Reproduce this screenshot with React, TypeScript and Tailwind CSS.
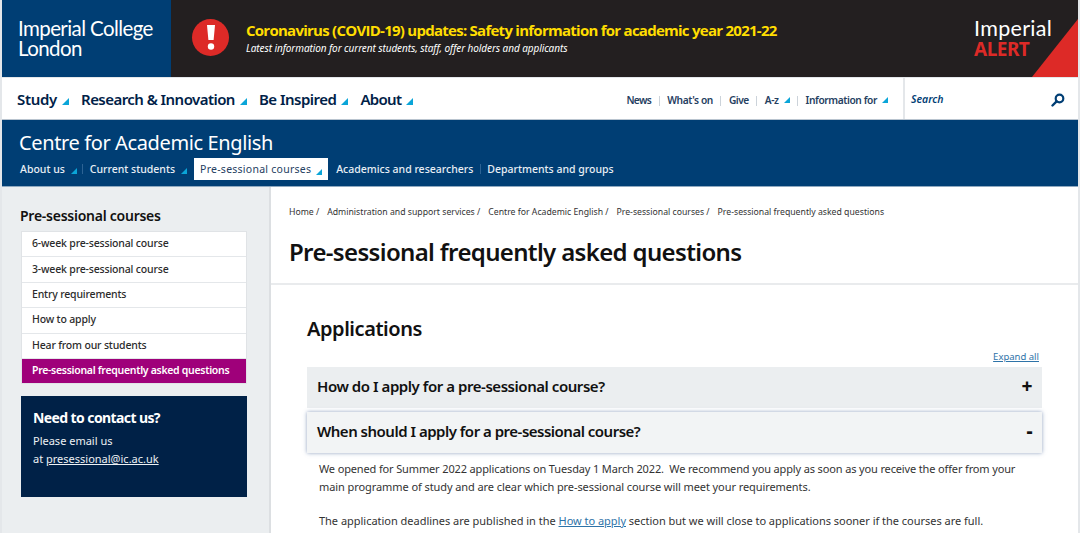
const mainNav = [
  { label: 'Study', cls: 'mr-[12px] tracking-[-0.3px]' },
  { label: 'Research & Innovation', cls: 'mr-[12px] tracking-[-0.55px]' },
  { label: 'Be Inspired', cls: 'mr-[12px] tracking-[-0.5px]' },
  { label: 'About', cls: 'mr-[12px] tracking-[-0.7px]' },
];
const sideLinks = [
  '6-week pre-sessional course',
  '3-week pre-sessional course',
  'Entry requirements',
  'How to apply',
  'Hear from our students',
];

function Marker({ size = 7, color = '#0aa5d8' }: { size?: number; color?: string }) {
  return (
    <svg width={size} height={size} viewBox="0 0 8 8" className="shrink-0">
      <polygon points="8,0 8,8 0,8" fill={color} />
    </svg>
  );
}

function Sep() {
  return <span className="w-px h-[10px] bg-[#ccd3da]" />;
}

export default function App() {
  return (
    <div className="w-[1080px] h-[533px] overflow-hidden bg-[#e4e7ea] pl-[2px] pr-[2px] font-['Noto_Sans',sans-serif]">
      {/* Alert banner */}
      <div className="flex h-[77px] bg-[#231f20]">
        <div className="w-[169px] bg-[#003e74] pl-[16px] pt-[18px] text-white text-[20.5px] leading-[20px] tracking-[-0.6px] font-['Lato',sans-serif]">
          Imperial College
          <br />
          London
        </div>
        <div className="ml-[21px] mt-[19px] w-[37px] h-[37px] rounded-full bg-[#dd2a27] flex items-center justify-center">
          <svg width="10" height="27" viewBox="0 0 10 27">
            <path d="M1 1h8l-1.4 15H2.400z" fill="#fff" />
            <circle cx="5" cy="22.500" r="3.200" fill="#fff" />
          </svg>
        </div>
        <div className="ml-[17px] pt-[20px]">
          <div className="text-[#ffdd00] text-[15px] leading-[20px] font-bold tracking-[-0.74px] font-['Open_Sans',sans-serif]">
            Coronavirus (COVID-19) updates: Safety information for academic year 2021-22
          </div>
          <div className="text-white text-[10px] leading-[16px] italic tracking-[-0.08px]">
            Latest information for current students, staff, offer holders and applicants
          </div>
        </div>
        <div className="ml-auto relative w-[104px] pt-[16px]">
          <div className="text-white text-[21.5px] leading-[24px] tracking-[0.3px] font-['Lato',sans-serif]">Imperial</div>
          <div className="text-[#dd2a27] text-[19px] leading-[19px] font-bold tracking-[-0.5px]">ALERT</div>
          <svg className="absolute right-0 bottom-0" width="46" height="58" viewBox="0 0 46 58">
            <polygon points="46,0 46,58 0,58" fill="#dd2a27" />
          </svg>
        </div>
      </div>

      {/* Main navigation */}
      <div className="flex h-[42px] mt-px bg-white border-b border-[#b9c4cf]">
        <div className="flex items-center pl-[15px] pt-[2px]">
          {mainNav.map((item) => (
            <div key={item.label} className={`flex items-center ${item.cls}`}>
              <span className="text-[#002147] text-[15px] font-semibold">{item.label}</span>
              <span className="ml-[5px] mt-[3px]">
                <Marker />
              </span>
            </div>
          ))}
        </div>
        <div className="ml-auto flex items-center gap-[7.5px] pr-[15px] pt-[4px] text-[#25405f] text-[10.200px] font-semibold tracking-[-0.4px]">
          <span className="tracking-[-0.6px]">News</span>
          <Sep />
          <span>What's on</span>
          <Sep />
          <span className="tracking-[-0.5px]">Give</span>
          <Sep />
          <span className="flex items-center gap-[5px]">
            A-z <Marker size={6} />
          </span>
          <Sep />
          <span className="flex items-center gap-[5px]">
            Information for <Marker size={6} />
          </span>
        </div>
        <div className="w-[175px] flex items-center justify-between border-l-2 border-[#e4e7ea] pl-[6px] pr-[13px] pt-[2px]">
          <span className="text-[#003e74] text-[10.500px] font-semibold italic">Search</span>
          <svg width="14" height="14" viewBox="0 0 14 14" className="mt-[1px]">
            <circle cx="8.500" cy="5.500" r="3.800" fill="none" stroke="#003e74" strokeWidth="2.200" />
            <path d="M5.600 8.400L1.500 12.500" stroke="#003e74" strokeWidth="2.400" strokeLinecap="round" />
          </svg>
        </div>
      </div>

      {/* Section header */}
      <div className="h-[67px] bg-[#003e74] border-b border-[#8fa9c0] pl-[18px] text-white">
        <div className="text-[20px] leading-[26px] pt-[10px] h-[38px] -ml-px tracking-[-0.38px]">Centre for Academic English</div>
        <div className="flex items-center text-[10.500px] font-medium h-[22px] text-[#e8eef4]">
          <span className="mt-[2px]">About us</span>
          <span className="ml-[6px] mr-[5px] mt-[3px]"><Marker size={6} /></span>
          <span className="w-px h-[10px] bg-[#2d6394] mr-[7px]" />
          <span className="mt-[2px]">Current students</span>
          <span className="ml-[6px] mr-[7px] mt-[3px]"><Marker size={6} /></span>
          <span className="flex items-center h-[22px] pt-[2px] bg-white text-[#25405f] px-[6px] font-normal tracking-[0.25px]">
            Pre-sessional courses
            <span className="ml-[5px] mt-[3px]"><Marker size={6} /></span>
          </span>
          <span className="ml-[8px] mt-[2px]">Academics and researchers</span>
          <span className="w-px h-[10px] bg-[#2d6394] mx-[6.5px]" />
          <span className="mt-[2px]">Departments and groups</span>
        </div>
      </div>

      {/* Body */}
      <div className="flex h-[347px]">
        <aside className="w-[269px] bg-[#ebeef0] border-r-2 border-[#dcdfe2] pl-[19px] pt-[20px]">
          <h2 className="text-[#111] text-[14px] leading-[18px] font-semibold tracking-[-0.25px] -ml-px">Pre-sessional courses</h2>
          <ul className="w-[226px] mt-[6px] border border-[#e0e3e6] bg-white">
            {sideLinks.map((link) => (
              <li key={link} className="h-[25.400px] flex items-center pl-[10px] border-b border-[#e4e7ea] text-[#2b2b2b] text-[10.500px] font-medium tracking-[-0.17px]">
                {link}
              </li>
            ))}
            <li className="h-[24.500px] flex items-center pl-[10px] bg-[#9f007a] text-white text-[10.500px] font-semibold tracking-[-0.3px]">
              Pre-sessional frequently asked questions
            </li>
          </ul>
          <div className="w-[226px] h-[101px] mt-[12px] bg-[#002147] px-[12px] pt-[13px] text-white">
            <div className="text-[14px] leading-[18px] font-bold tracking-[-0.6px]">Need to contact us?</div>
            <div className="text-[11px] leading-[18px] mt-[5px] text-[#eef1f4]">
              Please email us
              <br />
              at <span className="underline">presessional@ic.ac.uk</span>
            </div>
          </div>
        </aside>

        <main className="flex-1 bg-white">
          <div className="h-[98px] border-b-2 border-[#e9ebed] pl-[18px] pt-[19px]">
            <div className="flex items-center text-[#333] text-[8.700px] leading-[12px] gap-[8px]">
              <span>Home /</span>
              <span>Administration and support services /</span>
              <span>Centre for Academic English /</span>
              <span>Pre-sessional courses /</span>
              <span>Pre-sessional frequently asked questions</span>
            </div>
            <h1 className="text-[#111] text-[24px] leading-[30px] font-semibold mt-[19px] tracking-[-0.65px]">
              Pre-sessional frequently asked questions
            </h1>
          </div>
          <div className="pl-[36px] w-[771px]">
            <h2 className="text-[#111] text-[20px] leading-[26px] font-semibold mt-[31px] tracking-[-0.45px]">Applications</h2>
            <div className="text-right text-[9.500px] leading-[12px] mt-[9px] pr-[3px] text-[#2e73a8] underline">Expand all</div>
            <div className="h-[41px] mt-[4px] bg-[#ebeef0] flex items-center justify-between pb-[2px] pl-[10px] pr-[10px] text-[#111] text-[15px] font-semibold tracking-[-0.45px]">
              <span>How do I apply for a pre-sessional course?</span>
              <span className="text-[19px] font-extrabold">+</span>
            </div>
            <div className="h-[41px] mt-[4px] bg-[#f2f4f5] shadow-[0_0_4px_rgba(70,100,150,0.6)] flex items-center justify-between pb-[2px] pl-[10px] pr-[10px] text-[#111] text-[15px] font-semibold tracking-[-0.5px]">
              <span>When should I apply for a pre-sessional course?</span>
              <span className="text-[19px] font-extrabold">-</span>
            </div>
            <div className="pl-[12px] pt-[7px] text-[#333] text-[11px] leading-[18px]">
              <p className="tracking-[-0.14px]">We opened for Summer 2022 applications on Tuesday 1 March 2022.&nbsp; We recommend you apply as soon as you receive the offer from your</p>
              <p className="tracking-[-0.08px]">main programme of study and are clear which pre-sessional course will meet your requirements.</p>
              <p className="mt-[16px] tracking-[-0.02px]">
                The application deadlines are published in the <span className="text-[#2e73a8] underline">How to apply</span> section but we will close to applications sooner if the courses are full.
              </p>
            </div>
          </div>
        </main>
      </div>
    </div>
  );
}
